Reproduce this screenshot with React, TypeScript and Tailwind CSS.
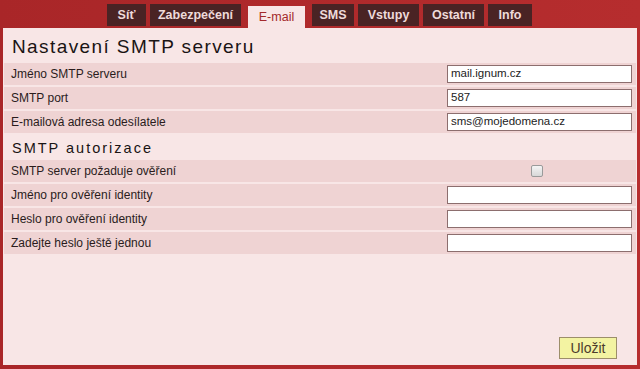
const tabs = [
  { label: 'Síť', w: 'w-[39px]' },
  { label: 'Zabezpečení', w: 'w-[91px]' },
  { label: 'E-mail', w: 'w-[57px]', active: true },
  { label: 'SMS', w: 'w-[42px]' },
  { label: 'Vstupy', w: 'w-[61px]' },
  { label: 'Ostatní', w: 'w-[61px]' },
  { label: 'Info', w: 'w-[44px]' },
];

function Row({ label, value, input = true, checkbox = false }: { label: string; value?: string; input?: boolean; checkbox?: boolean }) {
  return (
    <div className="flex h-[22px] items-center bg-[#efd3d3]">
      <span className="pl-[7px] text-[12px] text-[#2a1c1c] w-[443px]">{label}</span>
      {checkbox ? (
        <div className="flex w-[186px] justify-center">
          <span className="ml-[-6px] block h-[12px] w-[12px] rounded-[2px] border border-[#9a9a9a] bg-gradient-to-b from-[#f4f4f4] to-[#d8d8d8]" />
        </div>
      ) : input ? (
        <div className="flex h-[18px] w-[185px] items-center border border-[#8c6e6e] bg-white px-[3px] text-[11.5px] text-[#222]">
          {value}
        </div>
      ) : null}
    </div>
  );
}

export default function App() {
  return (
    <div className="flex h-[369px] w-[640px] flex-col bg-gradient-to-r from-[#a92628] to-[#b62d2e] font-['Liberation_Sans',Arial,sans-serif]">
      <div className="flex h-[28px] gap-[4px] pl-[107px]">
        {tabs.map((t) =>
          t.active ? (
            <div key={t.label} className={`${t.w} mx-[3px] mt-[6px] flex h-[22px] items-center justify-center bg-[#f8e6e6] text-[12.5px] text-[#a3292b]`}>
              {t.label}
            </div>
          ) : (
            <div key={t.label} className={`${t.w} mt-[4px] flex h-[22px] items-center justify-center bg-[#4a2324] text-[12.5px] font-semibold text-[#eedada]`}>
              {t.label}
            </div>
          )
        )}
      </div>
      <div className="mx-[3px] flex h-[337px] w-[634px] flex-col bg-[#f8e6e6] px-[1px]">
        <div className="flex h-[35px] items-end pb-[2px] pl-[8px] text-[19px] tracking-[1.4px] text-[#1a1414]">
          Nastavení SMTP serveru
        </div>
        <div className="flex flex-col gap-[2px]">
          <Row label="Jméno SMTP serveru" value="mail.ignum.cz" />
          <Row label="SMTP port" value="587" />
          <Row label="E-mailová adresa odesílatele" value="sms@mojedomena.cz" />
        </div>
        <div className="flex h-[27px] items-end pb-[3px] pl-[8px] text-[14.5px] leading-[18px] tracking-[2px] text-[#1a1414]">
          SMTP autorizace
        </div>
        <div className="flex flex-col gap-[2px]">
          <Row label="SMTP server požaduje ověření" checkbox />
          <Row label="Jméno pro ověření identity" value="" />
          <Row label="Heslo pro ověření identity" value="" />
          <Row label="Zadejte heslo ještě jednou" value="" />
        </div>
        <div className="flex-1" />
        <div className="flex justify-end pb-[6px] pr-[19px]">
          <button className="h-[22px] w-[58px] border border-[#9c8e6a] bg-[#f3f3a2] text-[14px] text-[#4d3b2c]">
            Uložit
          </button>
        </div>
      </div>
    </div>
  );
}
